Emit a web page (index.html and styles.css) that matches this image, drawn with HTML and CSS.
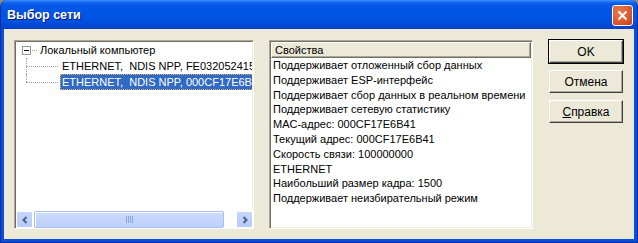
FILE: index.html
```html
<!DOCTYPE html>
<html lang="ru">
  <head>
    <meta charset="UTF-8" />
    <title>Выбор сети</title>
    <link rel="stylesheet" href="styles.css">
  </head>
  <body>
    <div class="window">
      <div class="titlebar">
        <span class="title">Выбор сети</span>
        <span class="close">
          <svg width="11" height="11" viewBox="0 0 11 11">
            <path d="M1.5 1.5 L9.5 9.5 M9.5 1.5 L1.5 9.5" stroke="#fff" stroke-width="2" fill="none" />
          </svg>
        </span>
      </div>
      <div class="client">
        <div class="tree">
          <div class="tree-body">
            <div class="node root">
              <span class="expander"></span>
              <span class="dots"></span>
              <span class="label">Локальный компьютер</span>
            </div>
            <div class="node child">
              <span class="branch"></span>
              <span class="label">ETHERNET,&nbsp; NDIS NPP, FE0320524150</span>
            </div>
            <div class="node child last">
              <span class="branch"></span>
              <span class="label selected">ETHERNET,&nbsp; NDIS NPP, 000CF17E6B41</span>
            </div>
          </div>
          <div class="hscroll">
            <span class="sbtn">
              <svg width="8" height="8" viewBox="0 0 8 8"><path d="M5.5 1 L2.5 4 L5.5 7" stroke="#4d6185" stroke-width="2" fill="none" /></svg>
            </span>
            <span class="track">
              <span class="thumb"><span class="grip"></span></span>
            </span>
            <span class="sbtn">
              <svg width="8" height="8" viewBox="0 0 8 8"><path d="M2.5 1 L5.5 4 L2.5 7" stroke="#4d6185" stroke-width="2" fill="none" /></svg>
            </span>
          </div>
        </div>

        <div class="props">
          <div class="props-header">Свойства</div>
          <ul class="props-list">
            <li>Поддерживает отложенный сбор данных</li>
            <li>Поддерживает ESP-интерфейс</li>
            <li>Поддерживает сбор данных в реальном времени</li>
            <li>Поддерживает сетевую статистику</li>
            <li>MAC-адрес: 000CF17E6B41</li>
            <li>Текущий адрес: 000CF17E6B41</li>
            <li>Скорость связи: 100000000</li>
            <li>ETHERNET</li>
            <li>Наибольший размер кадра: 1500</li>
            <li>Поддерживает неизбирательный режим</li>
          </ul>
        </div>

        <div class="buttons">
          <button class="btn default">OK</button>
          <button class="btn">Отмена</button>
          <button class="btn"><u>С</u>правка</button>
        </div>
      </div>
    </div>
  </body>
</html>
```

FILE: styles.css
```css
html {
  background: #8a8a8a;
}

body {
  margin: 0;
  padding: 0;
  font-family: "Liberation Sans", Arial, sans-serif;
  font-size: 11px;
}

.window {
  width: 638px;
  height: 243px;
  box-sizing: border-box;
  display: flex;
  flex-direction: column;
  background: #0a4fd8;
  border-radius: 7px 7px 0 0;
  border: 1px solid #0a2aa8;
  border-top: none;
  overflow: hidden;
}

.titlebar {
  height: 29px;
  flex: none;
  display: flex;
  align-items: center;
  justify-content: space-between;
  padding: 0 4px 0 6px;
  background: linear-gradient(
    #3d95ff 0,
    #1a6cf4 2px,
    #0a5ae8 4px,
    #0055e5 10px,
    #0053e2 20px,
    #0049d6 25px,
    #003fc6 29px
  );
}

.title {
  color: #fff;
  font-weight: bold;
  font-size: 12.5px;
  text-shadow: 1px 1px #0a1b7a;
  padding-top: 1px;
}

.close {
  width: 19px;
  height: 19px;
  margin-top: 1px;
  border: 1px solid #fff;
  border-radius: 3px;
  background: radial-gradient(circle at 35% 30%, #ea7b55, #dd5a30 55%, #c4401a);
  display: flex;
  align-items: center;
  justify-content: center;
}

.client {
  flex: 1;
  margin: 0 3px 3px;
  background: #ece9d8;
  display: flex;
  padding: 11px 11px 10px 10px;
  gap: 15px;
}

/* tree */

.tree {
  width: 240px;
  box-sizing: border-box;
  border: 1px solid;
  border-color: #aca899 #fff #fff #aca899;
  display: flex;
  flex-direction: column;
}

.tree-body {
  flex: 1;
  background: #fff;
  border: 1px solid;
  border-color: #716f64 #f1efe2 transparent #716f64;
  border-bottom: none;
  overflow: hidden;
  white-space: nowrap;
  font-size: 11px;
}

.node {
  height: 16px;
  display: flex;
  align-items: center;
}

.root {
  padding-left: 6px;
}

.expander {
  width: 7px;
  height: 7px;
  border: 1px solid #919b9c;
  position: relative;
  background: #fff;
}

.expander::after {
  content: "";
  position: absolute;
  left: 1px;
  top: 3px;
  width: 5px;
  height: 1px;
  background: #000;
}

.dots {
  width: 5px;
  margin: 0 1px 0 1px;
  border-top: 1px dotted #a0a0a0;
}

.child {
  padding-left: 10px;
}

.branch {
  width: 32px;
  height: 16px;
  position: relative;
  flex: none;
}

.branch::before {
  content: "";
  position: absolute;
  left: 0;
  top: 0;
  height: 16px;
  border-left: 1px dotted #a0a0a0;
}

.last .branch::before {
  height: 8px;
}

.branch::after {
  content: "";
  position: absolute;
  left: 0;
  top: 8px;
  width: 32px;
  border-top: 1px dotted #a0a0a0;
}

.label {
  padding: 0 2px;
  line-height: 16px;
  flex: none;
}

.child .label {
  margin-left: 2px;
}

.selected {
  background: #316ac5;
  color: #fff;
  outline: 1px dotted #e0b060;
  outline-offset: -1px;
  padding-right: 20px;
}

.hscroll {
  height: 17px;
  flex: none;
  display: flex;
  background: #fefefe;
  border-left: 1px solid #716f64;
}

.sbtn {
  width: 15px;
  height: 15px;
  flex: none;
  border: 1px solid #fff;
  border-radius: 2px;
  background: linear-gradient(#c6d6fc, #b6cbfa);
  display: flex;
  align-items: center;
  justify-content: center;
}

.track {
  flex: 1;
  display: flex;
  padding-right: 12px;
}

.thumb {
  flex: 1;
  margin-left: 1px;
  border: 1px solid #a9bff2;
  border-radius: 2px;
  background: linear-gradient(#cddcfd, #bcd0fb);
  box-shadow: inset 1px 1px #fff;
  display: flex;
  align-items: center;
  justify-content: center;
}

.grip {
  width: 7px;
  height: 7px;
  background: repeating-linear-gradient(90deg, #8ca4e0 0 1px, transparent 1px 2px);
}

/* properties list */

.props {
  width: 264px;
  box-sizing: border-box;
  background: #fff;
  border: 1px solid;
  border-color: #aca899 #fff #fff #aca899;
  box-shadow: inset 1px 1px #716f64, inset -1px -1px #f1efe2;
  padding: 1px;
  overflow: hidden;
}

.props-header {
  height: 16px;
  line-height: 15px;
  box-sizing: border-box;
  padding-left: 3px;
  background: #ece9d8;
  border: 1px solid;
  border-color: #fff #716f64 #716f64 #fff;
  box-shadow: inset -1px -1px #aca899;
}

.props-list {
  list-style: none;
  margin: 0;
  padding: 0 0 0 2px;
}

.props-list li {
  line-height: 14.8px;
  white-space: nowrap;
}

/* buttons */

.buttons {
  display: flex;
  flex-direction: column;
  gap: 7px;
  margin-left: 1px;
}

.btn {
  width: 74px;
  height: 23px;
  padding: 0;
  font-family: "Liberation Sans", Arial, sans-serif;
  font-size: 12px;
  color: #000;
  background: #ece9d8;
  border: 1px solid;
  border-color: #fff #404040 #404040 #fff;
  box-shadow: inset -1px -1px #aca899;
}

.btn.default {
  box-shadow: inset -1px -1px #aca899, 0 0 0 1px #000;
}
```
